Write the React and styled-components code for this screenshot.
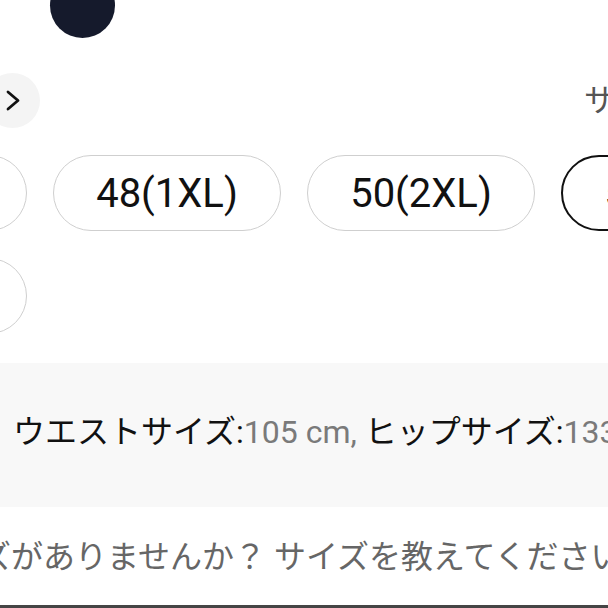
import React from "react";
import styled, { createGlobalStyle } from "styled-components";

const Global = createGlobalStyle`
  html, body { margin: 0; padding: 0; background: #fff; overflow: hidden; }
  * { box-sizing: border-box; }
`;

const Viewport = styled.div`
  width: 608px;
  height: 608px;
  overflow: hidden;
  display: flex;
  flex-direction: column;
  background: #fff;
  font-family: Roboto, "Noto Sans CJK JP", sans-serif;
  color: #111;
`;

const Canvas = styled.div`
  margin-top: -27px;
  margin-left: -201px;
  width: 1000px;
  display: flex;
  flex-direction: column;
  flex-shrink: 0;
`;

const SwatchRow = styled.div`
  display: flex;
  gap: 24px;
  padding-left: 251px;
`;

const Swatch = styled.div`
  width: 65px;
  height: 65px;
  border-radius: 50%;
  background: ${(p) => p.$color};
`;

const HeaderRow = styled.div`
  margin-top: 35px;
  display: flex;
  align-items: center;
  justify-content: space-between;
  padding-left: 186px;
  padding-right: 30px;
`;

const NavButton = styled.div`
  width: 55px;
  height: 55px;
  border-radius: 50%;
  background: #f4f4f4;
  display: flex;
  align-items: center;
  justify-content: flex-end;
  padding-right: 20px;
`;

const GuideLabel = styled.span`
  font-size: 31px;
  line-height: 1;
  color: #555;
  white-space: nowrap;
`;

const SizeGrid = styled.div`
  margin-top: 27px;
  display: grid;
  grid-template-columns: repeat(4, 228px);
  column-gap: 26px;
  row-gap: 27px;
`;

const Pill = styled.div`
  height: 76px;
  border-radius: 38px;
  border: ${(p) => (p.$selected ? "2.5px solid #111" : "1px solid #cfcfcf")};
  display: flex;
  align-items: center;
  justify-content: center;
  font-size: 40px;
  font-weight: 400;
  color: #111;
  white-space: nowrap;
`;

const InfoPanel = styled.div`
  margin-top: 29px;
  height: 144px;
  background: #f8f8f8;
  padding: 50px 0 0 13px;
  font-size: 32px;
  line-height: 38px;
  white-space: nowrap;
  flex-shrink: 0;
`;

const Value = styled.span`
  color: #7a7a7a;
`;

const Note = styled.div`
  margin-top: 31px;
  margin-left: -212px;
  font-size: 32px;
  line-height: 38px;
  color: #666;
  white-space: nowrap;
  flex-shrink: 0;
`;

const BottomBar = styled.div`
  margin-top: auto;
  height: 3px;
  background: #454545;
  flex-shrink: 0;
`;

const sizes = ["46(XL)", "48(1XL)", "50(2XL)", "52(3XL)", "54(4XL)"];

export default function App() {
  return (
    <>
      <Global />
      <Viewport>
        <Canvas>
          <SwatchRow>
            <Swatch $color="#151a2c" />
          </SwatchRow>
          <HeaderRow>
            <NavButton>
              <svg width="14" height="21" viewBox="0 0 14 21" fill="none">
                <path d="M2 2 L12 10.5 L2 19" stroke="#111" strokeWidth="2.8" strokeLinecap="round" strokeLinejoin="round" />
              </svg>
            </NavButton>
            <GuideLabel>サイズガイド</GuideLabel>
          </HeaderRow>
          <SizeGrid>
            {sizes.map((s) => (
              <Pill key={s} $selected={s === "52(3XL)"}>{s}</Pill>
            ))}
          </SizeGrid>
        </Canvas>
        <InfoPanel>
          ウエストサイズ:<Value>105 cm,</Value> ヒップサイズ:<Value>133 cm</Value>
        </InfoPanel>
        <Note>お探しのサイズがありませんか？ サイズを教えてください</Note>
        <BottomBar />
      </Viewport>
    </>
  );
}
